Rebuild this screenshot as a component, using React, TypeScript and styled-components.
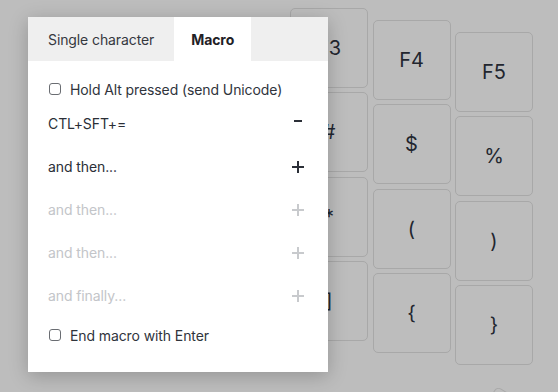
import React from "react";
import styled, { createGlobalStyle } from "styled-components";

const GlobalStyle = createGlobalStyle`
  html, body { margin: 0; padding: 0; }
  body {
    background: #bdbdbd;
    font-family: Inter, "Noto Sans", sans-serif;
    overflow: hidden;
  }
`;

const Stage = styled.div`
  position: relative;
  width: 558px;
  height: 392px;
  overflow: hidden;
  background: #bdbdbd;
`;

const Keyboard = styled.div`
  display: flex;
  gap: 4.5px;
  padding-left: 290px;
`;

const Column = styled.div<{ $offset: number }>`
  display: flex;
  flex-direction: column;
  gap: 4.4px;
  margin-top: ${(p) => p.$offset}px;
`;

const Key = styled.div`
  box-sizing: border-box;
  width: 78px;
  height: 80px;
  border: 1px solid #a8a8a8;
  border-radius: 5px;
  display: flex;
  align-items: center;
  justify-content: center;
  font-size: 20px;
  color: #22262f;
`;

const RotatedKey = styled(Key)`
  position: absolute;
  left: 497px;
  top: 386px;
  transform-origin: 0 0;
  transform: rotate(32deg);
`;

const Panel = styled.div`
  position: absolute;
  left: 28px;
  top: 17px;
  width: 300px;
  height: 355px;
  background: #ffffff;
  box-shadow: 0 4px 18px rgba(0, 0, 0, 0.22);
  display: flex;
  flex-direction: column;
`;

const TabList = styled.div`
  display: flex;
  gap: 4px;
  height: 44px;
  padding-left: 4px;
  background: #efefef;
`;

const Tab = styled.div<{ $active?: boolean }>`
  display: flex;
  align-items: center;
  padding: 0 ${(p) => (p.$active ? 17 : 16)}px;
  font-size: 14px;
  letter-spacing: -0.1px;
  color: ${(p) => (p.$active ? "#1f2126" : "#35383e")};
  font-weight: ${(p) => (p.$active ? 700 : 400)};
  background: ${(p) => (p.$active ? "#ffffff" : "transparent")};
`;

const Body = styled.div`
  display: flex;
  flex-direction: column;
  padding: 16px 20px 24px 20px;
`;

const CheckRow = styled.label<{ $gapTop?: number }>`
  display: flex;
  align-items: center;
  gap: 9px;
  height: 24px;
  margin-top: ${(p) => p.$gapTop ?? 0}px;
  font-size: 14px;
  letter-spacing: -0.1px;
  color: #30343c;
`;

const Box = styled.span`
  box-sizing: border-box;
  width: 12px;
  height: 12px;
  border: 1px solid #6a6d72;
  border-radius: 3px;
  background: #fff;
  margin-left: 1px;
`;

const MacroRow = styled.div<{ $disabled?: boolean }>`
  display: flex;
  align-items: center;
  justify-content: space-between;
  height: 43px;
  font-size: 14px;
  letter-spacing: -0.1px;
  color: ${(p) => (p.$disabled ? "#c3c5c9" : "#2b2f37")};
`;

const IconBox = styled.span`
  display: flex;
  align-items: center;
  justify-content: center;
  width: 20px;
  height: 20px;
`;

const Minus = () => (
  <svg width="12" height="12" viewBox="0 0 12 12">
    <line x1="2" y1="3" x2="10" y2="3" stroke="#2b2f37" strokeWidth="2" />
  </svg>
);

const Plus = ({ color }: { color: string }) => (
  <svg width="12" height="12" viewBox="0 0 12 12">
    <line x1="0" y1="6" x2="12" y2="6" stroke={color} strokeWidth="2" />
    <line x1="6" y1="0" x2="6" y2="12" stroke={color} strokeWidth="2" />
  </svg>
);

const columns = [
  { offset: 8, keys: ["F3", "#", "*", "]"] },
  { offset: 20, keys: ["F4", "$", "(", "{"] },
  { offset: 32, keys: ["F5", "%", ")", "}"] },
];

const rows = [
  { text: "CTL+SFT+=", kind: "minus" },
  { text: "and then...", kind: "plus" },
  { text: "and then...", kind: "plus", disabled: true },
  { text: "and then...", kind: "plus", disabled: true },
  { text: "and finally...", kind: "plus", disabled: true },
];

export default function App() {
  return (
    <>
      <GlobalStyle />
      <Stage>
        <Keyboard>
          {columns.map((c, i) => (
            <Column key={i} $offset={c.offset}>
              {c.keys.map((k) => (
                <Key key={k}>{k}</Key>
              ))}
            </Column>
          ))}
        </Keyboard>
        <RotatedKey />
        <Panel>
          <TabList>
            <Tab>Single character</Tab>
            <Tab $active>Macro</Tab>
          </TabList>
          <Body>
            <CheckRow style={{ marginBottom: 1 }}>
              <Box />
              Hold Alt pressed (send Unicode)
            </CheckRow>
            {rows.map((r, i) => (
              <MacroRow key={i} $disabled={r.disabled}>
                <span>{r.text}</span>
                <IconBox>
                  {r.kind === "minus" ? (
                    <Minus />
                  ) : (
                    <Plus color={r.disabled ? "#c8cacd" : "#2b2f37"} />
                  )}
                </IconBox>
              </MacroRow>
            ))}
            <CheckRow $gapTop={6}>
              <Box />
              End macro with Enter
            </CheckRow>
          </Body>
        </Panel>
      </Stage>
    </>
  );
}
